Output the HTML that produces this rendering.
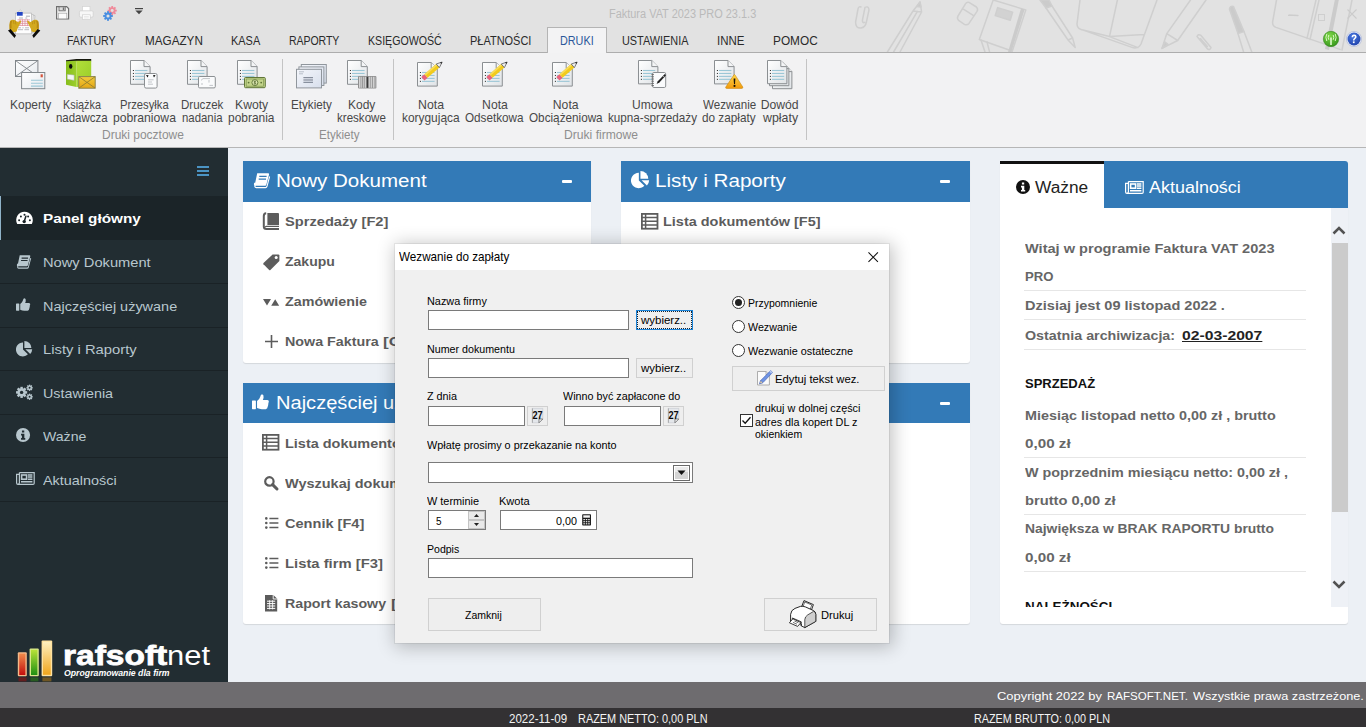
<!DOCTYPE html>
<html lang="pl">
<head>
<meta charset="utf-8">
<title>Faktura VAT 2023 PRO 23.1.3</title>
<style>
*{box-sizing:border-box;margin:0;padding:0}
html,body{width:1366px;height:727px;overflow:hidden;background:#ecf0f5;font-family:"Liberation Sans",sans-serif;}
.a{position:absolute}
.t{position:absolute;white-space:nowrap;transform-origin:0 0}
svg{position:absolute;overflow:visible}
#app{position:absolute;left:0;top:0;width:1366px;height:727px;overflow:hidden}
/* top ribbon */
#titlebar{left:0;top:0;width:1366px;height:52px;background:#e2e2e2}
#ribbon{left:0;top:52px;width:1366px;height:96px;background:#f2f2f3;border-top:1px solid #adadad}
#ribbonline{left:0;top:147px;width:1366px;height:1px;background:#b6b6b6}
#tabactive{left:547px;top:27px;width:60px;height:26px;background:#f3f3f4;border:1px solid #b4b4b4;border-bottom:none}
.rsep{position:absolute;top:59px;width:1px;height:81px;background:#c4c4c4}
/* sidebar */
#sidebar{left:0;top:148px;width:228px;height:534px;background:#222d32}
.srow{position:absolute;left:0;width:228px;height:1px;background:#1a2226}
#sactive{left:0;top:196px;width:228px;height:44px;background:#1b2428;border-left:1px solid #8fb2c8}
/* content */
.box{position:absolute;background:#fff;border-radius:0 0 3px 3px;box-shadow:0 1px 1px rgba(0,0,0,.1)}
.bh{position:absolute;background:#337ab7}
.minus{position:absolute;width:10px;height:3px;background:#fff;border-radius:1px}
/* footer */
#footer{left:0;top:682px;width:1366px;height:26px;background:#6e6c6f}
#status{left:0;top:708px;width:1366px;height:19px;background:#333133}
/* dialog */
#dlg{left:395px;top:244px;width:494px;height:399px;background:#f0f0f0;box-shadow:0 0 0 1px rgba(0,0,0,.06),2px 2px 17px 2px rgba(0,0,0,.24)}
#dlgtitle{left:0;top:0;width:494px;height:26px;background:#fff}
.inp{position:absolute;background:#fff;border:1px solid #7a7a7a}
.btn{position:absolute;background:#eeeeee;border:1px solid #d0d0d0}
.hr{position:absolute;left:24px;width:282px;height:1px;background:#e6e6e6}
.radio{position:absolute;width:13px;height:13px;border-radius:50%;background:#fff;border:1px solid #333}
</style>
</head>
<body>
<div id="app">

<!-- ===== title bar + ribbon ===== -->
<div id="titlebar" class="a"></div>
<svg style="left:0;top:0" width="1366" height="52" viewBox="0 0 1366 52"><g fill="none" stroke="#cfcfcf" stroke-width="1.5" stroke-linecap="round" stroke-linejoin="round">
<!-- paperclip -->
<path d="M858 9 L855.6 22 Q855.4 28.4 861 28 Q865.4 27.4 866.4 22 L869 10 Q868.6 5.6 865 7.4 L862.4 20.4 Q862.6 23.4 864.6 22.4 M858 9 Q858.6 6 861 7"/>
<!-- pencil -->
<path d="M920 2 L913 11 L887.4 52 M920 2 L921.6 12 L900 52 M913 11 L921.6 12 M917.4 11.4 L893.6 52"/>
<path d="M920 2 L917 6.4 L921 7 Z" fill="#cbcbcb"/>
<!-- eraser -->
<path d="M969 2.4 L976.4 7 Q978.4 9 977 11.4 L969 23.4 Q967 25.6 964.4 24.4 L958.6 20.4 Q956.6 18.4 958 16 L965.6 3.6 Q967 1.6 969 2.4 Z M962.6 8.6 L973.6 15.6"/>
<!-- notebook -->
<path d="M993.2 0 L1025.8 9.9 L1012 52 M993.2 0 L979.3 39.5 L1012 51"/>
<path d="M1021 8.6 L1008 52 L1011.4 52 L1024.6 9.6 Z" fill="#cbcbcb" stroke="none"/>
<path d="M997.6 7.6 L1012.6 12.2 L1010.2 20.2 L995.2 15.6 Z" fill="#d2d2d2"/>
<path d="M981 40 L985 52 M987 42 L989.6 52" />
<!-- pen -->
<path d="M1040 0 L1046 8 L1052 6 L1049 0 Z" fill="#cbcbcb"/>
<path d="M1046 8 L1068 40 L1075.2 47.4 L1072.6 38 L1052 6 M1068 40 L1072.6 38"/>
<!-- open notebook -->
<path d="M1080 0 L1077 24 Q1077 28 1081 29.4 L1132 47.4 Q1138 49.4 1141 44 L1157 0 M1117.4 0 L1109.5 36.6 M1109.5 36.6 L1144 34.6 M1081 29.4 L1109.5 36.6 L1138 47.6"/>
<!-- pen 2 -->
<path d="M1206 0 L1177.7 40.5 L1162 48.4 L1166.8 33.6 L1190.5 0 M1166.8 33.6 L1177.7 40.5"/>
<path d="M1162 48.4 L1165 42 L1168 44.4 Z" fill="#cbcbcb"/>
<!-- small clip -->
<path d="M1197 36.6 L1207.6 49 Q1210.4 50.4 1211 47.4 L1201 35.4 Q1198 33.4 1197 36.6 Z M1200.4 38.6 L1207.4 46.4"/>
<!-- marker -->
<path d="M1229.4 9 Q1230 5.4 1233.4 6.4 L1244 31.6 L1238 33.6 Z" fill="#cbcbcb"/>
<path d="M1238 33.6 L1243.6 52 M1244 31.6 L1251.8 52"/>
<!-- right notebook -->
<path d="M1276.5 0 L1272.6 22 Q1272.4 26 1276 27.4 L1340 49.4 M1319 0 L1310 39.5 M1316 0 L1307 38.4 M1289 15 L1298 15.4"/>
<path d="M1334.8 0 L1325 49 L1329 50 L1338.8 0 Z" fill="#cbcbcb" stroke="none"/>
<path d="M1352 0 L1342 50" />
</g></svg>
<div id="ribbon" class="a"></div>
<div id="ribbonline" class="a"></div>
<div id="tabactive" class="a"></div>
<div class="rsep" style="left:282px"></div>
<div class="rsep" style="left:393px"></div>
<div class="rsep" style="left:806px"></div>
<svg style="left:8px;top:8px" width="32.4" height="30" viewBox="0 0 32.4 30"><path d="M10.2 4.2 Q12.2 -1 14.2 4.2" fill="none" stroke="#f2f2f2" stroke-width="1.3"/><path d="M10.2 4.2 Q12.2 -1 14.2 4.2" fill="none" stroke="#9a9a9a" stroke-width="0.4"/><path d="M22 6.4 L27 7.6 L25.4 24.4 L21 24 Z" fill="#ededee" stroke="#a6a6a6" stroke-width="0.5"/><path d="M20 5.6 L25.2 6.6 L24.2 25 L19.6 24.8 Z" fill="#f6f6f6" stroke="#a6a6a6" stroke-width="0.5"/><rect x="7.3" y="5.1" width="16.4" height="20.8" fill="#fdfdfd" stroke="#a8a8a8" stroke-width="0.6"/><rect x="8.9" y="4" width="5.8" height="3.7" fill="#2346c4"/><path d="M18 8.2 H22 M11 10 H15 M17.4 10 H19.2" stroke="#9a9aa4" stroke-width="0.8"/><path d="M9.5 11.8 H22 M9.5 13.7 H22 M9.5 15.6 H22 M9.5 17.5 H22 M12 11.4 V17.9 M14.5 11.4 V17.9 M17 11.4 V17.9 M19.5 11.4 V17.9" stroke="#dc8a98" stroke-width="0.7"/><path d="M10 19.8 H13 M14.4 19.8 H15.6 M17 19.8 H21 M10 21.7 H15 M16.4 21.7 H21" stroke="#a8a8b0" stroke-width="0.8"/><path d="M8 25.9 H23.4 L24.6 27 H9.4 Z" fill="#d8d8d8"/><path d="M2 13.4 Q2.6 11.4 4.8 11.8 Q6.6 11.6 8.4 13.2 L10.4 14.2 L12.2 12.4 Q13.4 12.4 13 14 L11.4 17 L9.6 20.4 L8.6 23.4 L4.6 24.6 L1.6 21.2 Q1.2 17 2 13.4 Z" fill="#d3a91e"/><path d="M2 13.4 Q1.2 17 1.6 21.2 L3.6 20 Q3 16 4.2 12.6 Z" fill="#b88a12"/><path d="M5.4 12.4 L6 16 M7.4 12.8 L7.8 16.4" stroke="#a87c10" stroke-width="0.5" fill="none"/><path d="M0 22.6 L2.6 21 L8 27.6 L6.6 29.9 Z" fill="#0c0c0c"/><g transform="translate(32.3 0) scale(-1 1)"><path d="M2 13.4 Q2.6 11.4 4.8 11.8 Q6.6 11.6 8.4 13.2 L10.4 14.2 L12.2 12.4 Q13.4 12.4 13 14 L11.4 17 L9.6 20.4 L8.6 23.4 L4.6 24.6 L1.6 21.2 Q1.2 17 2 13.4 Z" fill="#d3a91e"/><path d="M2 13.4 Q1.2 17 1.6 21.2 L3.6 20 Q3 16 4.2 12.6 Z" fill="#b88a12"/><path d="M5.4 12.4 L6 16 M7.4 12.8 L7.8 16.4" stroke="#a87c10" stroke-width="0.5" fill="none"/><path d="M0 22.6 L2.6 21 L8 27.6 L6.6 29.9 Z" fill="#0c0c0c"/></g></svg><svg style="left:56px;top:5.8px" width="13.2" height="13.6" viewBox="0 0 13.2 13.6"><path d="M0.6 0.6 H10.6 L12.6 2.6 V13 H0.6 Z" fill="#f2f2f2" stroke="#6e6e6e" stroke-width="1.2"/><rect x="3" y="0.8" width="6.2" height="4" fill="#dcdcdc" stroke="#6e6e6e" stroke-width="0.9"/><rect x="6.8" y="1.4" width="1.4" height="2.6" fill="#6e6e6e"/><rect x="2.4" y="7.2" width="8.4" height="5.6" fill="#fbfbfb" stroke="#a0a0a0" stroke-width="0.6"/></svg><svg style="left:78.6px;top:5.6px" width="14.6" height="14" viewBox="0 0 14.6 14"><rect x="3.6" y="0.4" width="7.4" height="5" fill="#fff" stroke="#d2d2d2" stroke-width="0.7"/><rect x="0.4" y="4.8" width="13.8" height="6.4" rx="1.4" fill="#f7f7f7" stroke="#d0d0d0" stroke-width="0.8"/><rect x="3.4" y="8.8" width="7.8" height="4.8" fill="#fff" stroke="#cfcfcf" stroke-width="0.7"/><path d="M4.8 10.6 H9.8 M4.8 12 H9.8" stroke="#d6d6d6" stroke-width="0.6"/></svg><svg style="left:102.6px;top:5.6px" width="14" height="15" viewBox="0 0 14 15"><rect x="8.31" y="0.05" width="1.78" height="9.11" fill="#f08a9a" transform="rotate(0 9.2 4.6)"/><rect x="8.31" y="0.05" width="1.78" height="9.11" fill="#f08a9a" transform="rotate(45 9.2 4.6)"/><rect x="8.31" y="0.05" width="1.78" height="9.11" fill="#f08a9a" transform="rotate(90 9.2 4.6)"/><rect x="8.31" y="0.05" width="1.78" height="9.11" fill="#f08a9a" transform="rotate(135 9.2 4.6)"/><circle cx="9.2" cy="4.6" r="3.3" fill="#f08a9a"/><circle cx="9.2" cy="4.6" r="1.48" fill="#e2e2e2"/><rect x="4.05" y="5.17" width="1.89" height="9.66" fill="#4a8ee0" transform="rotate(0 5 10)"/><rect x="4.05" y="5.17" width="1.89" height="9.66" fill="#4a8ee0" transform="rotate(45 5 10)"/><rect x="4.05" y="5.17" width="1.89" height="9.66" fill="#4a8ee0" transform="rotate(90 5 10)"/><rect x="4.05" y="5.17" width="1.89" height="9.66" fill="#4a8ee0" transform="rotate(135 5 10)"/><circle cx="5" cy="10" r="3.5" fill="#4a8ee0"/><circle cx="5" cy="10" r="1.57" fill="#e2e2e2"/></svg><svg style="left:135.2px;top:7.6px" width="8" height="6.4" viewBox="0 0 8 6.4"><rect x="0" y="0" width="8" height="1.2" fill="#444"/><path d="M0.4 2.6 H7.6 L4 6.2 Z" fill="#444"/></svg><svg style="left:1323px;top:30.799999999999997px" width="16" height="16" viewBox="0 0 16 16"><circle cx="8" cy="8" r="7.7" fill="url(#gball)" stroke="#2c7c18" stroke-width="0.5"/><path d="M8 6.4 V14" stroke="#e8ffd8" stroke-width="1.5"/><path d="M5.8 4 Q4.6 6.4 5.8 8.8 M10.2 4 Q11.4 6.4 10.2 8.8 M3.8 2.8 Q2 6.4 3.8 10 M12.2 2.8 Q14 6.4 12.2 10" fill="none" stroke="#d8f8c0" stroke-width="1"/></svg><svg style="left:1346px;top:30.9px" width="16" height="16" viewBox="0 0 16 16"><circle cx="8" cy="8" r="7.6" fill="#e8ecf8" stroke="#9aa6cc" stroke-width="0.5"/><circle cx="8" cy="8" r="6.5" fill="url(#gbl)"/><path d="M5.6 6.2 Q5.6 3.6 8.1 3.6 Q10.6 3.6 10.6 5.8 Q10.6 7.2 9.2 8 Q8.4 8.6 8.4 9.6 H7 Q6.9 8 8 7.2 Q8.9 6.6 8.9 5.8 Q8.9 5 8.1 5 Q7.2 5 7.2 6.2 Z" fill="#fff"/><rect x="6.9" y="10.4" width="1.7" height="1.7" fill="#fff"/></svg><div class="a" style="left:1288px;top:15px;width:10px;height:1px;background:#cdcdcd"></div><div class="a" style="left:1318px;top:14px;width:7px;height:7px;border:1px solid #cfcfcf"></div><svg style="left:1347px;top:9px" width="10" height="10" viewBox="0 0 10 10"><path d="M0.5 0.5 L9.5 9.5 M9.5 0.5 L0.5 9.5" stroke="#cbcbcb" stroke-width="1.1"/></svg>
<svg width="0" height="0" style="left:0;top:0"><defs>
<linearGradient id="gdoc" x1="0" y1="0" x2="1" y2="1"><stop offset="0" stop-color="#ffffff"/><stop offset="1" stop-color="#dfe3e6"/></linearGradient>
<linearGradient id="genv" x1="0" y1="0" x2="1" y2="1"><stop offset="0" stop-color="#ffffff"/><stop offset="1" stop-color="#e6eaee"/></linearGradient>
<linearGradient id="gcard" x1="0" y1="0" x2="1" y2="1"><stop offset="0" stop-color="#f4f6fb"/><stop offset="1" stop-color="#d8dfec"/></linearGradient>
<linearGradient id="gyel" x1="0" y1="0" x2="0" y2="1"><stop offset="0" stop-color="#f3cb3c"/><stop offset="1" stop-color="#e4a614"/></linearGradient>
<linearGradient id="gwarn" x1="0" y1="0" x2="0" y2="1"><stop offset="0" stop-color="#ffd84a"/><stop offset="1" stop-color="#f29a0c"/></linearGradient>
<linearGradient id="ggrn" x1="0" y1="0" x2="1" y2="0"><stop offset="0" stop-color="#86bd1c"/><stop offset="1" stop-color="#9ccf2c"/></linearGradient>
<linearGradient id="ggrn2" x1="0" y1="0" x2="1" y2="1"><stop offset="0" stop-color="#b2df3a"/><stop offset="1" stop-color="#98cc28"/></linearGradient>
<radialGradient id="gball" cx=".4" cy=".3" r=".8"><stop offset="0" stop-color="#7fd84a"/><stop offset="1" stop-color="#2f8f16"/></radialGradient>
<radialGradient id="gbl" cx=".4" cy=".3" r=".8"><stop offset="0" stop-color="#4a78e0"/><stop offset="1" stop-color="#1c3fa8"/></radialGradient>
</defs></svg><svg style="left:14.6px;top:59.8px" width="31" height="30" viewBox="0 0 31 30"><rect x="0.5" y="0.5" width="22.4" height="16" fill="url(#genv)" stroke="#80868a"/><path d="M0.8 0.8 L22.6 16.2 M22.6 0.8 L0.8 16.2" fill="none" stroke="#80868a" stroke-width="0.9"/><rect x="6.6" y="12.5" width="23.2" height="16.2" fill="url(#genv)" stroke="#80868a"/><rect x="25.6" y="14.3" width="2.2" height="3" fill="#d4553c"/><path d="M16 20.2 H27.8 M16 23.2 H27.8 M16 26.1 H27.8" stroke="#9cc7d6" stroke-width="1.1"/></svg><svg style="left:65.8px;top:58.8px" width="30" height="30" viewBox="0 0 30 30"><path d="M0 1.2 L10.4 0 H25.2 V2.2 H10.4 L0 3 Z" fill="#16180c"/><path d="M0 2.2 L10.4 1.8 V28 L0 25.8 Z" fill="url(#ggrn)"/><path d="M10.4 1.8 H25.2 V27 L10.4 28 Z" fill="url(#ggrn2)"/><ellipse cx="4.7" cy="7.4" rx="1.7" ry="2.4" fill="#0c0c0c"/><path d="M1.2 15.2 L8.2 16 V21.4 L1.2 20.2 Z" fill="#f4f6f4" stroke="#9aa88a" stroke-width="0.5"/><rect x="12.8" y="17.6" width="16.4" height="11.6" fill="url(#gyel)" stroke="#8a8450" stroke-width="1"/><path d="M13 17.8 L29 29 M29 17.8 L13 29" fill="none" stroke="#8a7a30" stroke-width="0.8"/></svg><svg style="left:130.2px;top:60px" width="20.6" height="24.8" viewBox="0 0 20.6 24.8"><path d="M0.5 0.5 H14.000000000000002 L20.1 6.6 V24.3 H0.5 Z" fill="url(#gdoc)" stroke="#8b8f92" stroke-width="1"/><path d="M14.000000000000002 0.5 V6.6 H20.1" fill="#f4f5f6" stroke="#8b8f92" stroke-width="1"/><rect x="2.9" y="10.00" width="1" height="1" fill="#222"/><rect x="5" y="9.95" width="12.4" height="1.1" fill="#9cc7d6"/><rect x="2.9" y="12.95" width="1" height="1" fill="#222"/><rect x="5" y="12.90" width="12.4" height="1.1" fill="#9cc7d6"/><rect x="2.9" y="15.90" width="1" height="1" fill="#222"/><rect x="5" y="15.85" width="12.4" height="1.1" fill="#9cc7d6"/><rect x="2.9" y="18.85" width="1" height="1" fill="#222"/><rect x="5" y="18.80" width="12.4" height="1.1" fill="#9cc7d6"/></svg><svg style="left:144.2px;top:73.2px" width="13.6" height="15.6" viewBox="0 0 13.6 15.6"><rect x="0.5" y="0.5" width="12.6" height="14.6" rx="1.6" fill="#fafbfc" stroke="#8b8f92"/><path d="M2 2 L4.6 2.2 L3.6 4.4 Z M11.6 2 L9 2.2 L10 4.4 Z" fill="#111"/><path d="M4 6.8 H9.6 M4 9 H8 M4 11.2 H9" stroke="#b4b8bc" stroke-width="0.8"/></svg><svg style="left:187px;top:60px" width="20.6" height="24.8" viewBox="0 0 20.6 24.8"><path d="M0.5 0.5 H14.000000000000002 L20.1 6.6 V24.3 H0.5 Z" fill="url(#gdoc)" stroke="#8b8f92" stroke-width="1"/><path d="M14.000000000000002 0.5 V6.6 H20.1" fill="#f4f5f6" stroke="#8b8f92" stroke-width="1"/><rect x="2.9" y="10.00" width="1" height="1" fill="#222"/><rect x="5" y="9.95" width="12.4" height="1.1" fill="#9cc7d6"/><rect x="2.9" y="12.95" width="1" height="1" fill="#222"/><rect x="5" y="12.90" width="12.4" height="1.1" fill="#9cc7d6"/><rect x="2.9" y="15.90" width="1" height="1" fill="#222"/><rect x="5" y="15.85" width="12.4" height="1.1" fill="#9cc7d6"/><rect x="2.9" y="18.85" width="1" height="1" fill="#222"/><rect x="5" y="18.80" width="12.4" height="1.1" fill="#9cc7d6"/></svg><svg style="left:198.2px;top:76.4px" width="17.8" height="12.4" viewBox="0 0 17.8 12.4"><rect x="0.5" y="0.5" width="16.8" height="11.4" rx="1.2" fill="#fafbfc" stroke="#8b8f92"/><path d="M3 4.4 L5 2.6 H12 M3 8 H5 M11.4 9.4 H15 M11 4 V6.6" stroke="#b4b8bc" stroke-width="0.8" fill="none"/></svg><svg style="left:237px;top:60px" width="20.6" height="24.8" viewBox="0 0 20.6 24.8"><path d="M0.5 0.5 H14.000000000000002 L20.1 6.6 V24.3 H0.5 Z" fill="url(#gdoc)" stroke="#8b8f92" stroke-width="1"/><path d="M14.000000000000002 0.5 V6.6 H20.1" fill="#f4f5f6" stroke="#8b8f92" stroke-width="1"/><rect x="2.9" y="10.00" width="1" height="1" fill="#222"/><rect x="5" y="9.95" width="12.4" height="1.1" fill="#9cc7d6"/><rect x="2.9" y="12.95" width="1" height="1" fill="#222"/><rect x="5" y="12.90" width="12.4" height="1.1" fill="#9cc7d6"/><rect x="2.9" y="15.90" width="1" height="1" fill="#222"/><rect x="5" y="15.85" width="12.4" height="1.1" fill="#9cc7d6"/><rect x="2.9" y="18.85" width="1" height="1" fill="#222"/><rect x="5" y="18.80" width="12.4" height="1.1" fill="#9cc7d6"/></svg><svg style="left:244px;top:77.2px" width="21.8" height="11.2" viewBox="0 0 21.8 11.2"><rect x="0.5" y="0.5" width="20.8" height="10.2" rx="1" fill="#c3d48a" stroke="#5e7436"/><rect x="2.2" y="2" width="17.4" height="7.2" fill="none" stroke="#7e9650" stroke-width="0.7"/><circle cx="10.9" cy="5.6" r="3" fill="#dbe6b0" stroke="#5e7436" stroke-width="0.9"/><path d="M10.9 3.6 V7.6 M11.9 4.6 Q10.9 3.8 10 4.8 Q10.2 5.6 10.9 5.6 Q11.8 5.8 11.8 6.6 Q10.8 7.4 9.8 6.6" stroke="#4a6028" stroke-width="0.6" fill="none"/><circle cx="4.6" cy="5.6" r="0.9" fill="#5e7436"/><circle cx="17.2" cy="5.6" r="0.9" fill="#5e7436"/></svg><svg style="left:296px;top:64.4px" width="30.4" height="24" viewBox="0 0 30.4 24"><rect x="5.3" y="0.5" width="25" height="18.6" fill="url(#gcard)" stroke="#90969c"/><rect x="2.9" y="2.9" width="25" height="18.6" fill="url(#gcard)" stroke="#90969c"/><rect x="0.5" y="5.3" width="25" height="18.6" fill="url(#gcard)" stroke="#90969c"/><path d="M3 7.8 H8 M3 9.8 H7" stroke="#aab0bc" stroke-width="0.8"/><path d="M7.4 13.7 H17 M7.4 16 H17 M7.4 18.3 H17" stroke="#707888" stroke-width="1"/></svg><svg style="left:347px;top:60px" width="20.8" height="24.8" viewBox="0 0 20.8 24.8"><path d="M0.5 0.5 H14.200000000000001 L20.3 6.6 V24.3 H0.5 Z" fill="url(#gdoc)" stroke="#8b8f92" stroke-width="1"/><path d="M14.200000000000001 0.5 V6.6 H20.3" fill="#f4f5f6" stroke="#8b8f92" stroke-width="1"/><rect x="2.9" y="10.00" width="1" height="1" fill="#222"/><rect x="5" y="9.95" width="12.6" height="1.1" fill="#9cc7d6"/><rect x="2.9" y="12.95" width="1" height="1" fill="#222"/><rect x="5" y="12.90" width="12.6" height="1.1" fill="#9cc7d6"/><rect x="2.9" y="15.90" width="1" height="1" fill="#222"/><rect x="5" y="15.85" width="12.6" height="1.1" fill="#9cc7d6"/><rect x="2.9" y="18.85" width="1" height="1" fill="#222"/><rect x="5" y="18.80" width="12.6" height="1.1" fill="#9cc7d6"/></svg><svg style="left:357.8px;top:76.1px" width="18.4" height="12.6" viewBox="0 0 18.4 12.6"><rect x="0" y="0" width="18.4" height="12.6" rx="1" fill="#8f8f8f"/><rect x="1.2" y="0.8" width="1.2" height="11" fill="#e8e8e8"/><rect x="3.2" y="0.8" width="0.8" height="11" fill="#d0d0d0"/><rect x="4.8" y="0.8" width="1.6" height="11" fill="#c4c4c4"/><rect x="7.2" y="0.8" width="0.8" height="11" fill="#e0e0e0"/><rect x="8.8" y="0.8" width="1.4" height="11" fill="#3a3a3a"/><rect x="10.8" y="0.8" width="1" height="11" fill="#dcdcdc"/><rect x="12.6" y="0.8" width="1.6" height="11" fill="#cfcfcf"/><rect x="15" y="0.8" width="0.8" height="11" fill="#e4e4e4"/><rect x="16.4" y="0.8" width="1" height="11" fill="#c8c8c8"/></svg><svg style="left:417px;top:62px" width="20.8" height="24.6" viewBox="0 0 20.8 24.6"><path d="M0.5 0.5 H14.200000000000001 L20.3 6.6 V24.1 H0.5 Z" fill="url(#gdoc)" stroke="#8b8f92" stroke-width="1"/><path d="M14.200000000000001 0.5 V6.6 H20.3" fill="#f4f5f6" stroke="#8b8f92" stroke-width="1"/><rect x="2.9" y="10.00" width="1" height="1" fill="#222"/><rect x="5" y="9.95" width="12.6" height="1.1" fill="#9cc7d6"/><rect x="2.9" y="12.95" width="1" height="1" fill="#222"/><rect x="5" y="12.90" width="12.6" height="1.1" fill="#9cc7d6"/><rect x="2.9" y="15.90" width="1" height="1" fill="#222"/><rect x="5" y="15.85" width="12.6" height="1.1" fill="#9cc7d6"/><rect x="2.9" y="18.85" width="1" height="1" fill="#222"/><rect x="5" y="18.80" width="12.6" height="1.1" fill="#9cc7d6"/></svg><svg style="left:421.6px;top:59.4px" width="26" height="24" viewBox="0 0 26 24"><g transform="rotate(-41 3.5 17.5)"><rect x="0" y="15.1" width="4.2" height="4.8" fill="#e8627c"/><rect x="4.2" y="15.1" width="15.6" height="4.8" fill="#f2cb1c"/><rect x="4.2" y="15.1" width="15.6" height="1.7" fill="#f7dc5a"/><path d="M19.8 15.1 L25.6 17.5 L19.8 19.9 Z" fill="#f0f0f0" stroke="#555" stroke-width="0.7"/><path d="M23.6 16.5 L25.6 17.5 L23.6 18.5 Z" fill="#222"/></g></svg><svg style="left:482.4px;top:62px" width="20.8" height="24.6" viewBox="0 0 20.8 24.6"><path d="M0.5 0.5 H14.200000000000001 L20.3 6.6 V24.1 H0.5 Z" fill="url(#gdoc)" stroke="#8b8f92" stroke-width="1"/><path d="M14.200000000000001 0.5 V6.6 H20.3" fill="#f4f5f6" stroke="#8b8f92" stroke-width="1"/><rect x="2.9" y="10.00" width="1" height="1" fill="#222"/><rect x="5" y="9.95" width="12.6" height="1.1" fill="#9cc7d6"/><rect x="2.9" y="12.95" width="1" height="1" fill="#222"/><rect x="5" y="12.90" width="12.6" height="1.1" fill="#9cc7d6"/><rect x="2.9" y="15.90" width="1" height="1" fill="#222"/><rect x="5" y="15.85" width="12.6" height="1.1" fill="#9cc7d6"/><rect x="2.9" y="18.85" width="1" height="1" fill="#222"/><rect x="5" y="18.80" width="12.6" height="1.1" fill="#9cc7d6"/></svg><svg style="left:487.0px;top:59.4px" width="26" height="24" viewBox="0 0 26 24"><g transform="rotate(-41 3.5 17.5)"><rect x="0" y="15.1" width="4.2" height="4.8" fill="#e8627c"/><rect x="4.2" y="15.1" width="15.6" height="4.8" fill="#f2cb1c"/><rect x="4.2" y="15.1" width="15.6" height="1.7" fill="#f7dc5a"/><path d="M19.8 15.1 L25.6 17.5 L19.8 19.9 Z" fill="#f0f0f0" stroke="#555" stroke-width="0.7"/><path d="M23.6 16.5 L25.6 17.5 L23.6 18.5 Z" fill="#222"/></g></svg><svg style="left:552.4px;top:62px" width="20.8" height="24.6" viewBox="0 0 20.8 24.6"><path d="M0.5 0.5 H14.200000000000001 L20.3 6.6 V24.1 H0.5 Z" fill="url(#gdoc)" stroke="#8b8f92" stroke-width="1"/><path d="M14.200000000000001 0.5 V6.6 H20.3" fill="#f4f5f6" stroke="#8b8f92" stroke-width="1"/><rect x="2.9" y="10.00" width="1" height="1" fill="#222"/><rect x="5" y="9.95" width="12.6" height="1.1" fill="#9cc7d6"/><rect x="2.9" y="12.95" width="1" height="1" fill="#222"/><rect x="5" y="12.90" width="12.6" height="1.1" fill="#9cc7d6"/><rect x="2.9" y="15.90" width="1" height="1" fill="#222"/><rect x="5" y="15.85" width="12.6" height="1.1" fill="#9cc7d6"/><rect x="2.9" y="18.85" width="1" height="1" fill="#222"/><rect x="5" y="18.80" width="12.6" height="1.1" fill="#9cc7d6"/></svg><svg style="left:557.0px;top:59.4px" width="26" height="24" viewBox="0 0 26 24"><g transform="rotate(-41 3.5 17.5)"><rect x="0" y="15.1" width="4.2" height="4.8" fill="#e8627c"/><rect x="4.2" y="15.1" width="15.6" height="4.8" fill="#f2cb1c"/><rect x="4.2" y="15.1" width="15.6" height="1.7" fill="#f7dc5a"/><path d="M19.8 15.1 L25.6 17.5 L19.8 19.9 Z" fill="#f0f0f0" stroke="#555" stroke-width="0.7"/><path d="M23.6 16.5 L25.6 17.5 L23.6 18.5 Z" fill="#222"/></g></svg><svg style="left:638px;top:60px" width="20.4" height="24.4" viewBox="0 0 20.4 24.4"><path d="M0.5 0.5 H13.799999999999999 L19.9 6.6 V23.9 H0.5 Z" fill="url(#gdoc)" stroke="#8b8f92" stroke-width="1"/><path d="M13.799999999999999 0.5 V6.6 H19.9" fill="#f4f5f6" stroke="#8b8f92" stroke-width="1"/><rect x="2.9" y="10.00" width="1" height="1" fill="#222"/><rect x="5" y="9.95" width="12.2" height="1.1" fill="#9cc7d6"/><rect x="2.9" y="12.95" width="1" height="1" fill="#222"/><rect x="5" y="12.90" width="12.2" height="1.1" fill="#9cc7d6"/><rect x="2.9" y="15.90" width="1" height="1" fill="#222"/><rect x="5" y="15.85" width="12.2" height="1.1" fill="#9cc7d6"/><rect x="2.9" y="18.85" width="1" height="1" fill="#222"/><rect x="5" y="18.80" width="12.2" height="1.1" fill="#9cc7d6"/></svg><svg style="left:650.8px;top:72.4px" width="15.4" height="16" viewBox="0 0 15.4 16"><rect x="1.5" y="0.5" width="13.2" height="15" rx="1.4" fill="#fafbfc" stroke="#8b8f92"/><path d="M0.4 2.6 H3 M0.4 4.8 H3 M0.4 7 H3 M0.4 9.2 H3 M0.4 11.4 H3 M0.4 13.6 H3" stroke="#666" stroke-width="0.9"/><path d="M13.8 2 L15 3.2 L8.4 10.6 L5.6 12 L6.8 9.2 Z" fill="#222"/><path d="M12 4 L13.4 5.4" stroke="#bbb" stroke-width="0.8"/></svg><svg style="left:714.2px;top:60px" width="20.6" height="24.4" viewBox="0 0 20.6 24.4"><path d="M0.5 0.5 H14.000000000000002 L20.1 6.6 V23.9 H0.5 Z" fill="url(#gdoc)" stroke="#8b8f92" stroke-width="1"/><path d="M14.000000000000002 0.5 V6.6 H20.1" fill="#f4f5f6" stroke="#8b8f92" stroke-width="1"/><rect x="2.9" y="10.00" width="1" height="1" fill="#222"/><rect x="5" y="9.95" width="12.4" height="1.1" fill="#9cc7d6"/><rect x="2.9" y="12.95" width="1" height="1" fill="#222"/><rect x="5" y="12.90" width="12.4" height="1.1" fill="#9cc7d6"/><rect x="2.9" y="15.90" width="1" height="1" fill="#222"/><rect x="5" y="15.85" width="12.4" height="1.1" fill="#9cc7d6"/><rect x="2.9" y="18.85" width="1" height="1" fill="#222"/><rect x="5" y="18.80" width="12.4" height="1.1" fill="#9cc7d6"/></svg><svg style="left:724.8px;top:73.8px" width="18.6" height="15" viewBox="0 0 18.6 15"><path d="M9 0.8 Q9.6 0.2 10.2 1.2 L17.8 13 Q18.2 14.4 16.8 14.4 H1.6 Q0.2 14.4 0.8 13 Z" fill="url(#gwarn)" stroke="#c98a10" stroke-width="0.6"/><path d="M8.6 4.6 H10.4 L10 10 H9 Z" fill="#1a1408"/><circle cx="9.5" cy="11.9" r="1.05" fill="#1a1408"/></svg><svg style="left:771.8px;top:64.6px" width="20.4" height="24.2" viewBox="0 0 20.4 24.2"><path d="M0.5 0.5 H13.799999999999999 L19.9 6.6 V23.7 H0.5 Z" fill="url(#gdoc)" stroke="#8b8f92" stroke-width="1"/><path d="M13.799999999999999 0.5 V6.6 H19.9" fill="#f4f5f6" stroke="#8b8f92" stroke-width="1"/></svg><svg style="left:769.4px;top:62.3px" width="20.4" height="24.2" viewBox="0 0 20.4 24.2"><path d="M0.5 0.5 H13.799999999999999 L19.9 6.6 V23.7 H0.5 Z" fill="url(#gdoc)" stroke="#8b8f92" stroke-width="1"/><path d="M13.799999999999999 0.5 V6.6 H19.9" fill="#f4f5f6" stroke="#8b8f92" stroke-width="1"/></svg><svg style="left:767px;top:60px" width="20.4" height="24.2" viewBox="0 0 20.4 24.2"><path d="M0.5 0.5 H13.799999999999999 L19.9 6.6 V23.7 H0.5 Z" fill="url(#gdoc)" stroke="#8b8f92" stroke-width="1"/><path d="M13.799999999999999 0.5 V6.6 H19.9" fill="#f4f5f6" stroke="#8b8f92" stroke-width="1"/><rect x="2.9" y="10.00" width="1" height="1" fill="#222"/><rect x="5" y="9.95" width="12.2" height="1.1" fill="#9cc7d6"/><rect x="2.9" y="12.95" width="1" height="1" fill="#222"/><rect x="5" y="12.90" width="12.2" height="1.1" fill="#9cc7d6"/><rect x="2.9" y="15.90" width="1" height="1" fill="#222"/><rect x="5" y="15.85" width="12.2" height="1.1" fill="#9cc7d6"/><rect x="2.9" y="18.85" width="1" height="1" fill="#222"/><rect x="5" y="18.80" width="12.2" height="1.1" fill="#9cc7d6"/></svg>

<!-- ===== sidebar ===== -->
<div id="sidebar" class="a"></div>
<div id="sactive" class="a"></div>
<div class="srow" style="top:283px"></div>
<div class="srow" style="top:327px"></div>
<div class="srow" style="top:370px"></div>
<div class="srow" style="top:414px"></div>
<div class="srow" style="top:457px"></div>
<div class="srow" style="top:501px"></div>
<svg style="left:16px;top:212px" width="17" height="12" viewBox="0 0 17 12"><path d="M1.2 12 A8.3 8.3 0 1 1 15.8 12 Z" fill="#fff"/><g fill="#1b2428"><circle cx="3.1" cy="8.2" r="1"/><circle cx="4.9" cy="4.5" r="1"/><circle cx="8.5" cy="2.7" r="1"/><circle cx="12.1" cy="4.5" r="1"/><circle cx="13.9" cy="8.2" r="1"/><circle cx="8.2" cy="9.6" r="1.7"/></g><path d="M8.2 9.6 L9.9 4.3" stroke="#1b2428" stroke-width="1.5" stroke-linecap="round"/></svg><svg style="left:16.2px;top:254.6px" width="15.1" height="13.9" viewBox="0 0 17 13.5" preserveAspectRatio="none"><path d="M4.2 0.3 H15.2 Q16.4 0.3 16 1.6 L13.3 10.2 Q13 11 12.2 11 H2.2 Q0.6 11 1 9.4 Q1.3 8.6 2.2 8.5 L4.2 0.3 Z" fill="#b8c7ce"/><path d="M2.2 8.6 Q1.2 9.6 2.2 10.4 Q1.2 12.6 3.2 12.7 H12.6 Q13.6 12.7 14 11.6 L16.6 3 " fill="none" stroke="#b8c7ce" stroke-width="1.1"/><path d="M6.3 3 H13.6 M5.7 5.3 H13" stroke="#222d32" stroke-width="1.1"/></svg><svg style="left:16.3px;top:298.3px" width="14.5" height="13.1" viewBox="0 0 15 13.5"><rect x="0" y="5.6" width="3.4" height="7.6" rx="0.5" fill="#b8c7ce"/><path d="M4.4 6.2 Q6.6 4.6 7.2 2.4 Q7.5 0.2 8.8 0.2 Q10.4 0.6 10.1 3 Q9.9 4.4 9.4 5.2 H13.4 Q14.9 5.4 14.7 6.8 Q14.6 7.5 14.2 7.8 Q14.6 8.6 14 9.5 Q14.3 10.4 13.6 11.2 Q13.8 13 12 13.2 H8.6 Q6.4 13.2 4.4 12.2 Z" fill="#b8c7ce"/></svg><svg style="left:15.8px;top:340.5px" width="16.5" height="15.0" viewBox="0 0 16.5 15"><path d="M7 1.6 V8.4 L11.9 13.2 A6.9 6.9 0 1 1 7 1.6 Z" fill="#b8c7ce"/><path d="M8.4 0 A7 7 0 0 1 15.4 7 H8.4 Z" fill="#b8c7ce"/><path d="M9.4 8.3 H16.2 A6.9 6.9 0 0 1 14.2 13 Z" fill="#b8c7ce"/></svg><svg style="left:15.8px;top:384.2px" width="17.6" height="16.2" viewBox="0 0 17.6 16.2"><rect x="4.37" y="2.82" width="2.46" height="11.15" fill="#b8c7ce" transform="rotate(0.0 5.6 8.4)"/><rect x="4.37" y="2.82" width="2.46" height="11.15" fill="#b8c7ce" transform="rotate(45.0 5.6 8.4)"/><rect x="4.37" y="2.82" width="2.46" height="11.15" fill="#b8c7ce" transform="rotate(90.0 5.6 8.4)"/><rect x="4.37" y="2.82" width="2.46" height="11.15" fill="#b8c7ce" transform="rotate(135.0 5.6 8.4)"/><circle cx="5.6" cy="8.4" r="4.1" fill="#b8c7ce"/><circle cx="5.6" cy="8.4" r="1.72" fill="#222d32"/><rect x="12.91" y="0.67" width="1.38" height="6.26" fill="#b8c7ce" transform="rotate(0.0 13.6 3.8)"/><rect x="12.91" y="0.67" width="1.38" height="6.26" fill="#b8c7ce" transform="rotate(45.0 13.6 3.8)"/><rect x="12.91" y="0.67" width="1.38" height="6.26" fill="#b8c7ce" transform="rotate(90.0 13.6 3.8)"/><rect x="12.91" y="0.67" width="1.38" height="6.26" fill="#b8c7ce" transform="rotate(135.0 13.6 3.8)"/><circle cx="13.6" cy="3.8" r="2.3" fill="#b8c7ce"/><circle cx="13.6" cy="3.8" r="0.97" fill="#222d32"/><rect x="12.91" y="9.67" width="1.38" height="6.26" fill="#b8c7ce" transform="rotate(0.0 13.6 12.8)"/><rect x="12.91" y="9.67" width="1.38" height="6.26" fill="#b8c7ce" transform="rotate(45.0 13.6 12.8)"/><rect x="12.91" y="9.67" width="1.38" height="6.26" fill="#b8c7ce" transform="rotate(90.0 13.6 12.8)"/><rect x="12.91" y="9.67" width="1.38" height="6.26" fill="#b8c7ce" transform="rotate(135.0 13.6 12.8)"/><circle cx="13.6" cy="12.8" r="2.3" fill="#b8c7ce"/><circle cx="13.6" cy="12.8" r="0.97" fill="#222d32"/></svg><svg style="left:15.8px;top:428.2px" width="14.1" height="14.1" viewBox="0 0 14 14"><circle cx="7" cy="7" r="7" fill="#b8c7ce"/><path d="M5.9 2.4 H8.2 V4.4 H5.9 Z M5 5.8 H8.3 V10 H9.2 V11.6 H5 V10 H5.9 V7.4 H5 Z" fill="#222d32"/></svg><svg style="left:15.8px;top:472.2px" width="18.8" height="13.0" viewBox="0 0 18.8 13"><path d="M3.4 0.6 H18.2 V11.2 Q18.2 12.4 17 12.4 H2 Q0.6 12.4 0.6 11 V2.4 H3.4" fill="none" stroke="#b8c7ce" stroke-width="1.2"/><path d="M3.4 0.6 V11 Q3.3 12.3 2 12.4" fill="none" stroke="#b8c7ce" stroke-width="1.2"/><rect x="5.6" y="3" width="5" height="4.2" fill="none" stroke="#b8c7ce" stroke-width="1.6"/><path d="M12 3 H16.4 M12 5.1 H16.4 M12 7.2 H16.4 M5 9.7 H16.4" stroke="#b8c7ce" stroke-width="1.5"/></svg><div class="a" style="left:197px;top:166px;width:12px;height:2px;background:#4b94c4"></div><div class="a" style="left:197px;top:170px;width:12px;height:2px;background:#4b94c4"></div><div class="a" style="left:197px;top:174px;width:12px;height:2px;background:#4b94c4"></div>
<svg style="left:17px;top:640px" width="37" height="42" viewBox="0 0 37 42">
<defs>
<linearGradient id="lg1" x1="0" y1="0" x2="0" y2="1"><stop offset="0" stop-color="#f08a4a"/><stop offset="1" stop-color="#c30d0d"/></linearGradient>
<linearGradient id="lg2" x1="0" y1="0" x2="0" y2="1"><stop offset="0" stop-color="#b8e238"/><stop offset="1" stop-color="#1f8f12"/></linearGradient>
<linearGradient id="lg3" x1="0" y1="0" x2="0" y2="1"><stop offset="0" stop-color="#fff0c0"/><stop offset="1" stop-color="#f0a51c"/></linearGradient>
</defs>
<rect x="0.8" y="12.2" width="9" height="24" rx="1" fill="#f5b98a"/><rect x="2.2" y="13.6" width="6.2" height="21.4" fill="url(#lg1)"/>
<rect x="12.6" y="8.4" width="9.2" height="27.8" rx="1" fill="#d9e88a"/><rect x="14" y="9.8" width="6.4" height="25.2" fill="url(#lg2)"/>
<rect x="24.6" y="0.4" width="10.6" height="35.8" rx="1" fill="#ffe2a0"/><rect x="26" y="1.8" width="7.8" height="33" fill="url(#lg3)"/>
<rect x="1.5" y="37.4" width="8" height="4" fill="#7a1818" opacity=".75"/>
<rect x="13.4" y="37.4" width="8" height="4" fill="#2a6a1c" opacity=".75"/>
<rect x="25.4" y="37.4" width="9" height="4" fill="#8a6420" opacity=".75"/>
</svg>

<!-- ===== content panels ===== -->
<div class="box" style="left:243px;top:161px;width:348px;height:202px"></div>
<div class="bh" style="left:243px;top:161px;width:348px;height:41px"></div>
<div class="minus" style="left:562px;top:180px"></div>

<div class="box" style="left:621px;top:161px;width:349px;height:202px"></div>
<div class="bh" style="left:621px;top:161px;width:349px;height:41px"></div>
<div class="minus" style="left:940px;top:180px"></div>

<div class="box" style="left:243px;top:383px;width:727px;height:241px"></div>
<div class="bh" style="left:243px;top:383px;width:727px;height:40px"></div>
<div class="minus" style="left:940px;top:402px"></div>

<!-- right tab box -->
<div class="box" style="left:1000px;top:161px;width:348px;height:463px;border-radius:3px"></div>
<div class="bh" style="left:1104px;top:161px;width:244px;height:47px;border-radius:0 3px 0 0"></div>
<div class="a" style="left:1000px;top:161px;width:104px;height:3px;background:#111"></div>
<!-- scroll bar -->
<div class="a" style="left:1331px;top:208px;width:17px;height:399px;background:#eef1f6"></div>
<div class="a" style="left:1332px;top:243px;width:16px;height:269px;background:#cbcbcb"></div>
<svg style="left:1332px;top:224px" width="14" height="12" viewBox="0 0 14 12"><path d="M1.5 9.5 L7 4 L12.5 9.5" fill="none" stroke="#525252" stroke-width="2.5"/></svg>
<svg style="left:1332px;top:579px" width="14" height="12" viewBox="0 0 14 12"><path d="M1.5 2.5 L7 8 L12.5 2.5" fill="none" stroke="#525252" stroke-width="2.5"/></svg>
<div id="scroll" class="a" style="left:1000px;top:208px;width:331px;height:399px;overflow:hidden">
<div class="hr" style="top:82px"></div>
<div class="hr" style="top:111px"></div>
<div class="hr" style="top:141px"></div>
<div class="hr" style="top:249px"></div>
<div class="hr" style="top:306px"></div>
<div class="hr" style="top:363px"></div>
<span class="t" style="left:25.1px;top:34.25px;font-size:13.4px;line-height:13.4px;color:#666;transform:scaleX(1.088);font-weight:700;">Witaj w programie Faktura VAT 2023</span>
<span class="t" style="left:25.1px;top:62.25px;font-size:13.4px;line-height:13.4px;color:#666;transform:scaleX(0.980);font-weight:700;">PRO</span>
<span class="t" style="left:25.1px;top:91.25px;font-size:13.4px;line-height:13.4px;color:#666;transform:scaleX(1.087);font-weight:700;">Dzisiaj jest 09 listopad 2022 .</span>
<span class="t" style="left:25.1px;top:121.25px;font-size:13.4px;line-height:13.4px;color:#666;transform:scaleX(1.067);font-weight:700;">Ostatnia archiwizacja:</span>
<span class="t" style="left:181.6px;top:121.25px;font-size:13.4px;line-height:13.4px;color:#222;transform:scaleX(1.173);font-weight:700;text-decoration:underline;">02-03-2007</span>
<span class="t" style="left:25.1px;top:169.25px;font-size:13.4px;line-height:13.4px;color:#111;transform:scaleX(0.971);font-weight:700;">SPRZEDAŻ</span>
<span class="t" style="left:25.1px;top:201.25px;font-size:13.4px;line-height:13.4px;color:#666;transform:scaleX(1.073);font-weight:700;">Miesiąc listopad netto 0,00 zł , brutto</span>
<span class="t" style="left:25.1px;top:229.25px;font-size:13.4px;line-height:13.4px;color:#666;transform:scaleX(1.136);font-weight:700;">0,00 zł</span>
<span class="t" style="left:25.1px;top:258.25px;font-size:13.4px;line-height:13.4px;color:#666;transform:scaleX(1.071);font-weight:700;">W poprzednim miesiącu netto: 0,00 zł ,</span>
<span class="t" style="left:25.1px;top:286.25px;font-size:13.4px;line-height:13.4px;color:#666;transform:scaleX(1.098);font-weight:700;">brutto 0,00 zł</span>
<span class="t" style="left:25.1px;top:314.25px;font-size:13.4px;line-height:13.4px;color:#666;transform:scaleX(1.036);font-weight:700;">Największa w BRAK RAPORTU brutto</span>
<span class="t" style="left:25.1px;top:343.25px;font-size:13.4px;line-height:13.4px;color:#666;transform:scaleX(1.136);font-weight:700;">0,00 zł</span>
<span class="t" style="left:25.1px;top:392.25px;font-size:13.4px;line-height:13.4px;color:#111;font-weight:700;">NALEŻNOŚCI</span>
</div>
<svg style="left:252.9px;top:172.6px" width="17.0" height="15.5" viewBox="0 0 17 13.5" preserveAspectRatio="none"><path d="M4.2 0.3 H15.2 Q16.4 0.3 16 1.6 L13.3 10.2 Q13 11 12.2 11 H2.2 Q0.6 11 1 9.4 Q1.3 8.6 2.2 8.5 L4.2 0.3 Z" fill="#fff"/><path d="M2.2 8.6 Q1.2 9.6 2.2 10.4 Q1.2 12.6 3.2 12.7 H12.6 Q13.6 12.7 14 11.6 L16.6 3 " fill="none" stroke="#fff" stroke-width="1.1"/><path d="M6.3 3 H13.6 M5.7 5.3 H13" stroke="#337ab7" stroke-width="1.1"/></svg><svg style="left:631px;top:171.4px" width="18.5" height="16.8" viewBox="0 0 16.5 15"><path d="M7 1.6 V8.4 L11.9 13.2 A6.9 6.9 0 1 1 7 1.6 Z" fill="#fff"/><path d="M8.4 0 A7 7 0 0 1 15.4 7 H8.4 Z" fill="#fff"/><path d="M9.4 8.3 H16.2 A6.9 6.9 0 0 1 14.2 13 Z" fill="#fff"/></svg><svg style="left:252.4px;top:394.4px" width="17.2" height="15.5" viewBox="0 0 15 13.5"><rect x="0" y="5.6" width="3.4" height="7.6" rx="0.5" fill="#fff"/><path d="M4.4 6.2 Q6.6 4.6 7.2 2.4 Q7.5 0.2 8.8 0.2 Q10.4 0.6 10.1 3 Q9.9 4.4 9.4 5.2 H13.4 Q14.9 5.4 14.7 6.8 Q14.6 7.5 14.2 7.8 Q14.6 8.6 14 9.5 Q14.3 10.4 13.6 11.2 Q13.8 13 12 13.2 H8.6 Q6.4 13.2 4.4 12.2 Z" fill="#fff"/></svg><svg style="left:263.1px;top:213.3px" width="16.4" height="16.8" viewBox="0 0 16.4 16.8"><path d="M4.4 0 H15 Q16 0 16 1 V12 H4.4 Z" fill="#5c5c5c"/><path d="M3.2 0.2 Q0.8 0.4 0.8 3 V13.4 Q0.8 16 3.4 16 H16 " fill="none" stroke="#5c5c5c" stroke-width="2"/><path d="M16 13.3 H3.4 Q2.2 13.4 2.2 14.6" fill="none" stroke="#5c5c5c" stroke-width="1.2"/></svg><svg style="left:263px;top:253.8px" width="16.6" height="16.6" viewBox="0 0 16.6 16.6"><path d="M9.6 0.4 H15.4 Q16.4 0.4 16.4 1.4 V7 L7.4 16 Q6.8 16.5 6.2 16 L0.5 10.2 Q0 9.6 0.5 9 Z" fill="#5c5c5c"/><circle cx="13.2" cy="3.6" r="1.5" fill="#fff"/></svg><svg style="left:263.1px;top:299px" width="16.4" height="7" viewBox="0 0 16.4 7"><path d="M0 0 H8 L4 6.6 Z M8.2 6.8 H16.2 L12.2 0.2 Z" fill="#5c5c5c"/></svg><svg style="left:264.6px;top:335.2px" width="13" height="13" viewBox="0 0 13 13"><path d="M6.5 0 V13 M0 6.5 H13" stroke="#5c5c5c" stroke-width="1.6" fill="none"/></svg><svg style="left:641.2px;top:212.8px" width="17.4" height="16.6" viewBox="0 0 17.4 16.6"><rect x="0.9" y="0.9" width="15.6" height="14.8" fill="none" stroke="#5c5c5c" stroke-width="1.8"/><path d="M1 4.6 H16.4 M1 8.3 H16.4 M1 12 H16.4 M4.6 1 V15.6" stroke="#5c5c5c" stroke-width="1.5"/></svg><svg style="left:262.3px;top:434.3px" width="17.4" height="16.6" viewBox="0 0 17.4 16.6"><rect x="0.9" y="0.9" width="15.6" height="14.8" fill="none" stroke="#5c5c5c" stroke-width="1.8"/><path d="M1 4.6 H16.4 M1 8.3 H16.4 M1 12 H16.4 M4.6 1 V15.6" stroke="#5c5c5c" stroke-width="1.5"/></svg><svg style="left:264px;top:475.8px" width="14" height="14" viewBox="0 0 14 14"><circle cx="5.4" cy="5.4" r="4.2" fill="none" stroke="#5c5c5c" stroke-width="2.2"/><path d="M8.6 8.6 L13 13" stroke="#5c5c5c" stroke-width="3" stroke-linecap="round"/></svg><svg style="left:264.7px;top:517px" width="13.4" height="12" viewBox="0 0 13.4 12"><g fill="#5c5c5c"><circle cx="1.3" cy="1.4" r="1.3"/><circle cx="1.3" cy="6" r="1.3"/><circle cx="1.3" cy="10.6" r="1.3"/></g><path d="M4.4 1.4 H13.4 M4.4 6 H13.4 M4.4 10.6 H13.4" stroke="#5c5c5c" stroke-width="1.5"/></svg><svg style="left:264.7px;top:557px" width="13.4" height="12" viewBox="0 0 13.4 12"><g fill="#5c5c5c"><circle cx="1.3" cy="1.4" r="1.3"/><circle cx="1.3" cy="6" r="1.3"/><circle cx="1.3" cy="10.6" r="1.3"/></g><path d="M4.4 1.4 H13.4 M4.4 6 H13.4 M4.4 10.6 H13.4" stroke="#5c5c5c" stroke-width="1.5"/></svg><svg style="left:264.8px;top:594.6px" width="12.2" height="16.4" viewBox="0 0 12.2 16.4"><path d="M0 0 H8.4 L12.2 3.8 V16.4 H0 Z" fill="#5c5c5c"/><path d="M8.2 0 V4 H12.2" fill="none" stroke="#fff" stroke-width="0.9"/><path d="M2 6.2 H10.2 M2 8.6 H10.2 M2 11 H10.2 M2 13.4 H10.2" stroke="#fff" stroke-width="1"/><path d="M4.6 5.2 V14.4 M7.6 5.2 V14.4" stroke="#fff" stroke-width="0.8"/></svg><svg style="left:1015.6px;top:179.5px" width="14.0" height="14.0" viewBox="0 0 14 14"><circle cx="7" cy="7" r="7" fill="#111"/><path d="M5.9 2.4 H8.2 V4.4 H5.9 Z M5 5.8 H8.3 V10 H9.2 V11.6 H5 V10 H5.9 V7.4 H5 Z" fill="#fff"/></svg><svg style="left:1125px;top:180.8px" width="18.8" height="13.0" viewBox="0 0 18.8 13"><path d="M3.4 0.6 H18.2 V11.2 Q18.2 12.4 17 12.4 H2 Q0.6 12.4 0.6 11 V2.4 H3.4" fill="none" stroke="#fff" stroke-width="1.2"/><path d="M3.4 0.6 V11 Q3.3 12.3 2 12.4" fill="none" stroke="#fff" stroke-width="1.2"/><rect x="5.6" y="3" width="5" height="4.2" fill="none" stroke="#fff" stroke-width="1.6"/><path d="M12 3 H16.4 M12 5.1 H16.4 M12 7.2 H16.4 M5 9.7 H16.4" stroke="#fff" stroke-width="1.5"/></svg>

<!-- ===== footer ===== -->
<div id="footer" class="a"></div>
<div id="status" class="a"></div>

<span class="t" style="left:608.6px;top:8.25px;font-size:12px;line-height:12px;color:#bababa;transform:scaleX(0.912);">Faktura VAT 2023 PRO 23.1.3</span>
<span class="t" style="left:67.2px;top:34.25px;font-size:13.5px;line-height:13.5px;color:#2a2a2a;transform:scaleX(0.783);">FAKTURY</span>
<span class="t" style="left:144.5px;top:34.25px;font-size:13.5px;line-height:13.5px;color:#2a2a2a;transform:scaleX(0.867);">MAGAZYN</span>
<span class="t" style="left:231.2px;top:34.25px;font-size:13.5px;line-height:13.5px;color:#2a2a2a;transform:scaleX(0.810);">KASA</span>
<span class="t" style="left:289.2px;top:34.25px;font-size:13.5px;line-height:13.5px;color:#2a2a2a;letter-spacing:-0.09px;transform:scaleX(0.780);">RAPORTY</span>
<span class="t" style="left:368.0px;top:34.25px;font-size:13.5px;line-height:13.5px;color:#2a2a2a;transform:scaleX(0.787);">KSIĘGOWOŚĆ</span>
<span class="t" style="left:470.2px;top:34.25px;font-size:13.5px;line-height:13.5px;color:#2a2a2a;transform:scaleX(0.813);">PŁATNOŚCI</span>
<span class="t" style="left:560.0px;top:34.25px;font-size:13.5px;line-height:13.5px;color:#2b579a;transform:scaleX(0.801);">DRUKI</span>
<span class="t" style="left:622.0px;top:34.25px;font-size:13.5px;line-height:13.5px;color:#2a2a2a;transform:scaleX(0.806);">USTAWIENIA</span>
<span class="t" style="left:717.0px;top:34.25px;font-size:13.5px;line-height:13.5px;color:#2a2a2a;transform:scaleX(0.851);">INNE</span>
<span class="t" style="left:773.0px;top:34.25px;font-size:13.5px;line-height:13.5px;color:#2a2a2a;transform:scaleX(0.876);">POMOC</span>
<span class="t" style="left:9.9px;top:99.25px;font-size:12.2px;line-height:12.2px;color:#484848;transform:scaleX(0.982);">Koperty</span>
<span class="t" style="left:63.0px;top:99.25px;font-size:12.2px;line-height:12.2px;color:#484848;transform:scaleX(0.890);">Książka</span>
<span class="t" style="left:56.2px;top:112.25px;font-size:12.2px;line-height:12.2px;color:#484848;transform:scaleX(0.940);">nadawcza</span>
<span class="t" style="left:120.3px;top:99.25px;font-size:12.2px;line-height:12.2px;color:#484848;transform:scaleX(0.921);">Przesyłka</span>
<span class="t" style="left:112.9px;top:112.25px;font-size:12.2px;line-height:12.2px;color:#484848;">pobraniowa</span>
<span class="t" style="left:180.8px;top:99.25px;font-size:12.2px;line-height:12.2px;color:#484848;transform:scaleX(0.948);">Druczek</span>
<span class="t" style="left:181.9px;top:112.25px;font-size:12.2px;line-height:12.2px;color:#484848;transform:scaleX(0.935);">nadania</span>
<span class="t" style="left:235.0px;top:99.25px;font-size:12.2px;line-height:12.2px;color:#484848;">Kwoty</span>
<span class="t" style="left:228.2px;top:112.25px;font-size:12.2px;line-height:12.2px;color:#484848;transform:scaleX(0.980);">pobrania</span>
<span class="t" style="left:291.0px;top:99.25px;font-size:12.2px;line-height:12.2px;color:#484848;transform:scaleX(0.956);">Etykiety</span>
<span class="t" style="left:347.7px;top:99.25px;font-size:12.2px;line-height:12.2px;color:#484848;transform:scaleX(0.985);">Kody</span>
<span class="t" style="left:337.0px;top:112.25px;font-size:12.2px;line-height:12.2px;color:#484848;transform:scaleX(0.949);">kreskowe</span>
<span class="t" style="left:417.7px;top:99.25px;font-size:12.2px;line-height:12.2px;color:#484848;transform:scaleX(1.009);">Nota</span>
<span class="t" style="left:402.0px;top:112.25px;font-size:12.2px;line-height:12.2px;color:#484848;transform:scaleX(0.977);">korygująca</span>
<span class="t" style="left:482.1px;top:99.25px;font-size:12.2px;line-height:12.2px;color:#484848;">Nota</span>
<span class="t" style="left:465.1px;top:112.25px;font-size:12.2px;line-height:12.2px;color:#484848;transform:scaleX(0.961);">Odsetkowa</span>
<span class="t" style="left:552.8px;top:99.25px;font-size:12.2px;line-height:12.2px;color:#484848;">Nota</span>
<span class="t" style="left:528.9px;top:112.25px;font-size:12.2px;line-height:12.2px;color:#484848;transform:scaleX(0.962);">Obciążeniowa</span>
<span class="t" style="left:631.8px;top:99.25px;font-size:12.2px;line-height:12.2px;color:#484848;transform:scaleX(0.987);">Umowa</span>
<span class="t" style="left:607.8px;top:112.25px;font-size:12.2px;line-height:12.2px;color:#484848;transform:scaleX(0.959);">kupna-sprzedaży</span>
<span class="t" style="left:703.0px;top:99.25px;font-size:12.2px;line-height:12.2px;color:#484848;transform:scaleX(0.951);">Wezwanie</span>
<span class="t" style="left:702.3px;top:112.25px;font-size:12.2px;line-height:12.2px;color:#484848;transform:scaleX(0.964);">do zapłaty</span>
<span class="t" style="left:760.7px;top:99.25px;font-size:12.2px;line-height:12.2px;color:#484848;">Dowód</span>
<span class="t" style="left:762.8px;top:112.25px;font-size:12.2px;line-height:12.2px;color:#484848;transform:scaleX(1.015);">wpłaty</span>
<span class="t" style="left:102.3px;top:129.25px;font-size:12.2px;line-height:12.2px;color:#8e8e8e;transform:scaleX(0.983);">Druki pocztowe</span>
<span class="t" style="left:319.2px;top:129.25px;font-size:12.2px;line-height:12.2px;color:#8e8e8e;transform:scaleX(0.951);">Etykiety</span>
<span class="t" style="left:563.9px;top:129.25px;font-size:12.2px;line-height:12.2px;color:#8e8e8e;transform:scaleX(0.994);">Druki firmowe</span>
<span class="t" style="left:42.8px;top:212.25px;font-size:13.1px;line-height:13.1px;color:#fff;transform:scaleX(1.168);font-weight:700;">Panel główny</span>
<span class="t" style="left:42.8px;top:256.25px;font-size:13.1px;line-height:13.1px;color:#b8c7ce;transform:scaleX(1.121);">Nowy Dokument</span>
<span class="t" style="left:42.8px;top:300.25px;font-size:13.1px;line-height:13.1px;color:#b8c7ce;transform:scaleX(1.104);">Najczęściej używane</span>
<span class="t" style="left:42.8px;top:343.25px;font-size:13.1px;line-height:13.1px;color:#b8c7ce;transform:scaleX(1.130);">Listy i Raporty</span>
<span class="t" style="left:42.8px;top:387.25px;font-size:13.1px;line-height:13.1px;color:#b8c7ce;transform:scaleX(1.094);">Ustawienia</span>
<span class="t" style="left:42.8px;top:430.25px;font-size:13.1px;line-height:13.1px;color:#b8c7ce;transform:scaleX(1.076);">Ważne</span>
<span class="t" style="left:42.8px;top:474.25px;font-size:13.1px;line-height:13.1px;color:#b8c7ce;transform:scaleX(1.101);">Aktualności</span>
<span class="t" style="left:62.9px;top:641.25px;font-size:28.2px;line-height:28.2px;color:#fff;transform:scaleX(1.188);font-weight:700;-webkit-text-stroke:0.8px #fff;">rafsoft</span>
<span class="t" style="left:166.9px;top:641.25px;font-size:28.2px;line-height:28.2px;color:#fff;transform:scaleX(1.098);">net</span>
<span class="t" style="left:63.8px;top:669.25px;font-size:8.4px;line-height:8.4px;color:#fff;transform:scaleX(1.041);font-weight:700;font-style:italic;">Oprogramowanie dla firm</span>
<span class="t" style="left:275.6px;top:172.25px;font-size:18.3px;line-height:18.3px;color:#fff;transform:scaleX(1.123);">Nowy Dokument</span>
<span class="t" style="left:654.9px;top:172.25px;font-size:18.3px;line-height:18.3px;color:#fff;transform:scaleX(1.129);">Listy i Raporty</span>
<span class="t" style="left:275.9px;top:394.25px;font-size:18.3px;line-height:18.3px;color:#fff;transform:scaleX(1.098);">Najczęściej używane</span>
<span class="t" style="left:284.8px;top:215.25px;font-size:13.7px;line-height:13.7px;color:#5c5c5c;transform:scaleX(1.070);font-weight:700;">Sprzedaży [F2]</span>
<span class="t" style="left:284.8px;top:255.25px;font-size:13.7px;line-height:13.7px;color:#5c5c5c;transform:scaleX(1.025);font-weight:700;">Zakupu</span>
<span class="t" style="left:284.8px;top:295.25px;font-size:13.7px;line-height:13.7px;color:#5c5c5c;transform:scaleX(1.045);font-weight:700;">Zamówienie</span>
<span class="t" style="left:284.8px;top:335.25px;font-size:13.7px;line-height:13.7px;color:#5c5c5c;transform:scaleX(1.044);font-weight:700;">Nowa Faktura</span>
<span class="t" style="left:383.4px;top:335.25px;font-size:13.7px;line-height:13.7px;color:#5c5c5c;transform:scaleX(1.241);font-weight:700;">[Ctrl+N]</span>
<span class="t" style="left:663.2px;top:215.25px;font-size:13.7px;line-height:13.7px;color:#5c5c5c;transform:scaleX(1.057);font-weight:700;">Lista dokumentów [F5]</span>
<span class="t" style="left:284.9px;top:437.25px;font-size:13.7px;line-height:13.7px;color:#5c5c5c;transform:scaleX(1.057);font-weight:700;">Lista dokumentów [F5]</span>
<span class="t" style="left:284.9px;top:477.25px;font-size:13.7px;line-height:13.7px;color:#5c5c5c;transform:scaleX(1.058);font-weight:700;">Wyszukaj dokument</span>
<span class="t" style="left:284.9px;top:517.25px;font-size:13.7px;line-height:13.7px;color:#5c5c5c;transform:scaleX(1.064);font-weight:700;">Cennik [F4]</span>
<span class="t" style="left:284.9px;top:557.25px;font-size:13.7px;line-height:13.7px;color:#5c5c5c;transform:scaleX(1.081);font-weight:700;">Lista firm [F3]</span>
<span class="t" style="left:284.9px;top:597.25px;font-size:13.7px;line-height:13.7px;color:#5c5c5c;transform:scaleX(1.038);font-weight:700;">Raport kasowy</span>
<span class="t" style="left:390.8px;top:597.25px;font-size:13.7px;line-height:13.7px;color:#5c5c5c;letter-spacing:0.27px;transform:scaleX(1.250);font-weight:700;">[F7]</span>
<span class="t" style="left:1035.0px;top:179.25px;font-size:17.3px;line-height:17.3px;color:#222;">Ważne</span>
<span class="t" style="left:1149.0px;top:179.25px;font-size:17.3px;line-height:17.3px;color:#fff;transform:scaleX(1.039);">Aktualności</span>
<span class="t" style="left:997.2px;top:691.25px;font-size:11.8px;line-height:11.8px;color:#fff;transform:scaleX(1.095);">Copyright 2022 by</span>
<span class="t" style="left:1106.8px;top:691.25px;font-size:11.8px;line-height:11.8px;color:#fff;transform:scaleX(0.979);">RAFSOFT.NET.</span>
<span class="t" style="left:1193.1px;top:691.25px;font-size:11.8px;line-height:11.8px;color:#fff;transform:scaleX(1.077);">Wszystkie prawa zastrzeżone.</span>
<span class="t" style="left:508.6px;top:712.25px;font-size:13px;line-height:13px;color:#f4f4f4;transform:scaleX(0.888);">2022-11-09</span>
<span class="t" style="left:577.6px;top:712.25px;font-size:13px;line-height:13px;color:#f4f4f4;transform:scaleX(0.839);">RAZEM NETTO: 0,00 PLN</span>
<span class="t" style="left:973.5px;top:712.25px;font-size:13px;line-height:13px;color:#f4f4f4;transform:scaleX(0.831);">RAZEM BRUTTO: 0,00 PLN</span>

<!-- ===== dialog ===== -->
<div id="dlg" class="a">
  <div id="dlgtitle" class="a"></div>
  <svg style="left:473px;top:8px" width="10.4" height="10.4" viewBox="0 0 11 11"><path d="M0.5 0.5 L10.5 10.5 M10.5 0.5 L0.5 10.5" stroke="#111" stroke-width="1.1" fill="none"/></svg>
  <!-- inputs -->
  <div class="inp" style="left:33px;top:66px;width:201px;height:20px"></div>
  <div class="btn" style="left:241px;top:66px;width:57px;height:20px;border:1px solid #1c84d8;background:#efefef"></div>
  <div class="a" style="left:242px;top:67px;width:55px;height:18px;border:1px dotted #123"></div>
  <div class="inp" style="left:33px;top:114px;width:201px;height:20px"></div>
  <div class="btn" style="left:241px;top:114px;width:57px;height:20px"></div>
  <div class="inp" style="left:33px;top:162px;width:97px;height:20px"></div>
  <div class="btn" style="left:132px;top:162px;width:21px;height:20px"></div>
  <div class="inp" style="left:169px;top:162px;width:97px;height:20px"></div>
  <div class="btn" style="left:268px;top:162px;width:21px;height:20px"></div>
  <!-- combo -->
  <div class="inp" style="left:33px;top:218px;width:265px;height:21px"></div>
  <div class="btn" style="left:278px;top:221px;width:17px;height:16px;border-color:#6a6a6a;background:linear-gradient(#ebebeb 45%,#d4d4d4 46%);box-shadow:inset 0 0 0 1px #fff"></div>
  <svg style="left:282px;top:226px" width="9" height="6" viewBox="0 0 9 6"><path d="M0.5 0.5 L8.5 0.5 L4.5 5 Z" fill="#111"/></svg>
  <!-- spin -->
  <div class="inp" style="left:33px;top:266px;width:58px;height:20px"></div>
  <div class="btn" style="left:73px;top:267px;width:17px;height:9px;background:#e9e9e9;border-color:#c4c4c4"></div>
  <div class="btn" style="left:73px;top:276px;width:17px;height:9px;background:#e9e9e9;border-color:#c4c4c4"></div>
  <svg style="left:79px;top:270px" width="5" height="3" viewBox="0 0 5 3"><path d="M0 3 L2.5 0 L5 3 Z" fill="#222"/></svg>
  <svg style="left:79px;top:279px" width="5" height="3" viewBox="0 0 5 3"><path d="M0 0 L2.5 3 L5 0 Z" fill="#222"/></svg>
  <!-- kwota -->
  <div class="inp" style="left:105px;top:266px;width:97px;height:20px"></div>
  <!-- podpis -->
  <div class="inp" style="left:33px;top:314px;width:265px;height:20px"></div>
  <!-- bottom buttons -->
  <div class="btn" style="left:33px;top:354px;width:113px;height:33px"></div>
  <div class="btn" style="left:369px;top:354px;width:113px;height:33px"></div>
  <!-- radios -->
  <div class="radio" style="left:337px;top:52px"></div>
  <div class="a" style="left:340px;top:55px;width:7px;height:7px;border-radius:50%;background:#222"></div>
  <div class="radio" style="left:337px;top:76px"></div>
  <div class="radio" style="left:337px;top:100px"></div>
  <!-- edit button -->
  <div class="btn" style="left:337px;top:122px;width:153px;height:25px"></div>
  <!-- checkbox -->
  <div class="a" style="left:345px;top:170px;width:13px;height:13px;background:#fff;border:1px solid #333"></div>
  <svg style="left:346px;top:171px" width="11" height="11" viewBox="0 0 11 11"><path d="M1.5 5.5 L4.2 8.3 L9.5 2.2" stroke="#111" stroke-width="1.3" fill="none"/></svg>
  <svg style="left:136.60000000000002px;top:164.2px" width="11.2" height="15.2" viewBox="0 0 11.2 15.2"><path d="M0.4 0.4 H10.8 V11 L7 14.8 H0.4 Z" fill="#e4e7eb" stroke="#c2c6cc" stroke-width="0.6"/><path d="M0.4 0.4 V14.8" stroke="#8a8a8a" stroke-width="0.6"/><path d="M10.8 11 H7 V14.8 Z" fill="#fafafa" stroke="#555" stroke-width="0.7"/><text x="0.5" y="10.6" font-family="Liberation Sans" font-weight="700" font-size="10.6" fill="#0a0a0a" textLength="10.2" lengthAdjust="spacingAndGlyphs">27</text></svg><svg style="left:272.79999999999995px;top:164.2px" width="11.2" height="15.2" viewBox="0 0 11.2 15.2"><path d="M0.4 0.4 H10.8 V11 L7 14.8 H0.4 Z" fill="#e4e7eb" stroke="#c2c6cc" stroke-width="0.6"/><path d="M0.4 0.4 V14.8" stroke="#8a8a8a" stroke-width="0.6"/><path d="M10.8 11 H7 V14.8 Z" fill="#fafafa" stroke="#555" stroke-width="0.7"/><text x="0.5" y="10.6" font-family="Liberation Sans" font-weight="700" font-size="10.6" fill="#0a0a0a" textLength="10.2" lengthAdjust="spacingAndGlyphs">27</text></svg><svg style="left:362px;top:126.39999999999998px" width="16" height="15.6" viewBox="0 0 16 15.6"><path d="M0.5 1.5 H9 L12.4 4.8 V15 H0.5 Z" fill="#fbfbfb" stroke="#9a9a9a" stroke-width="0.8"/><path d="M9 1.5 V4.8 H12.4" fill="#e8e8e8" stroke="#9a9a9a" stroke-width="0.7"/><path d="M13.6 0.6 L15.6 2.4 L6 12.6 L2.6 13.8 L3.6 10.6 Z" fill="#6f94e4" stroke="#3c5cb0" stroke-width="0.6"/><path d="M13.6 0.6 L15.6 2.4 L14.4 3.6 L12.4 1.8 Z" fill="#b8c8f0"/><path d="M3.6 10.6 L6 12.6 L2.6 13.8 Z" fill="#f0d8a8" stroke="#3c5cb0" stroke-width="0.4"/></svg><svg style="left:187.10000000000002px;top:270.29999999999995px" width="9.2" height="11.8" viewBox="0 0 9.2 11.8"><rect x="0.2" y="0.2" width="8.8" height="11.4" rx="0.8" fill="#1a1a1a"/><rect x="1.3" y="1.3" width="6.6" height="2.4" fill="#f4f4f4"/><rect x="1.4" y="5.0" width="1.5" height="1.2" fill="#f0f0f0"/><rect x="3.8" y="5.0" width="1.5" height="1.2" fill="#f0f0f0"/><rect x="6.2" y="5.0" width="1.5" height="1.2" fill="#f0f0f0"/><rect x="1.4" y="7.1" width="1.5" height="1.2" fill="#f0f0f0"/><rect x="3.8" y="7.1" width="1.5" height="1.2" fill="#f0f0f0"/><rect x="6.2" y="7.1" width="1.5" height="1.2" fill="#f0f0f0"/><rect x="1.4" y="9.2" width="1.5" height="1.2" fill="#f0f0f0"/><rect x="3.8" y="9.2" width="1.5" height="1.2" fill="#f0f0f0"/><rect x="6.2" y="9.2" width="1.5" height="1.2" fill="#f0f0f0"/></svg><svg style="left:394px;top:356.1px" width="27.4" height="28.6" viewBox="0 0 27.4 28.6"><path d="M12.6 6.8 L15 0.6 L24.4 4.6 L21.6 12.4" fill="#fff" stroke="#111" stroke-width="0.9" stroke-linejoin="round"/><path d="M14 6.6 L15.8 2 L22.8 5 L20.8 10.4" fill="none" stroke="#111" stroke-width="0.6"/><path d="M1.6 14.4 Q2 10 6 8.4 L11.4 6.4 Q14 5.8 16.6 7 L24.6 10.6 Q26.8 11.8 26.8 14.4 V21.4 L15.8 27.6 L12.2 25.8 L12.2 24 L3.4 20.4 L1.6 21.2 Z" fill="#fff" stroke="#111" stroke-width="0.9" stroke-linejoin="round"/><path d="M15.8 27.6 V19.6 Q16 16.6 18.6 15 L24.6 11.4 Q26.6 11.6 26.8 14.4 V21.4 Z" fill="#cfcfcf" stroke="#111" stroke-width="0.7" stroke-linejoin="round"/><path d="M3.4 18 L12.2 21.8 V25.8 M3.4 18 V20.4" fill="none" stroke="#111" stroke-width="0.8"/><path d="M3.8 18.8 L0.4 22.8 L8.6 26.4 L12 22.6 Z" fill="#fff" stroke="#111" stroke-width="0.8" stroke-linejoin="round"/><path d="M4 22.4 L8 24.2 M5.4 21 L9.4 22.8" stroke="#111" stroke-width="0.6"/></svg>
  <span class="t" style="left:3.6px;top:7.25px;font-size:12.2px;line-height:12.2px;color:#000;transform:scaleX(0.959);">Wezwanie do zapłaty</span>
<span class="t" style="left:31.6px;top:51.25px;font-size:11.6px;line-height:11.6px;color:#000;transform:scaleX(0.938);">Nazwa firmy</span>
<span class="t" style="left:245.8px;top:70.25px;font-size:11.6px;line-height:11.6px;color:#000;transform:scaleX(0.989);">wybierz..</span>
<span class="t" style="left:31.6px;top:99.25px;font-size:11.6px;line-height:11.6px;color:#000;transform:scaleX(0.921);">Numer dokumentu</span>
<span class="t" style="left:245.8px;top:118.25px;font-size:11.6px;line-height:11.6px;color:#000;transform:scaleX(0.989);">wybierz..</span>
<span class="t" style="left:31.6px;top:146.25px;font-size:11.6px;line-height:11.6px;color:#000;transform:scaleX(0.932);">Z dnia</span>
<span class="t" style="left:167.9px;top:146.25px;font-size:11.6px;line-height:11.6px;color:#000;transform:scaleX(0.929);">Winno być zapłacone do</span>
<span class="t" style="left:352.5px;top:53.25px;font-size:11.6px;line-height:11.6px;color:#000;transform:scaleX(0.903);">Przypomnienie</span>
<span class="t" style="left:352.5px;top:77.25px;font-size:11.6px;line-height:11.6px;color:#000;transform:scaleX(0.922);">Wezwanie</span>
<span class="t" style="left:352.5px;top:101.25px;font-size:11.6px;line-height:11.6px;color:#000;transform:scaleX(0.934);">Wezwanie ostateczne</span>
<span class="t" style="left:379.7px;top:129.25px;font-size:11.6px;line-height:11.6px;color:#000;transform:scaleX(0.971);">Edytuj tekst wez.</span>
<span class="t" style="left:359.5px;top:158.25px;font-size:11.6px;line-height:11.6px;color:#000;transform:scaleX(0.935);">drukuj w dolnej części</span>
<span class="t" style="left:359.5px;top:172.25px;font-size:11.6px;line-height:11.6px;color:#000;transform:scaleX(0.933);">adres dla kopert DL z</span>
<span class="t" style="left:359.5px;top:184.25px;font-size:11.6px;line-height:11.6px;color:#000;transform:scaleX(0.903);">okienkiem</span>
<span class="t" style="left:31.6px;top:195.25px;font-size:11.6px;line-height:11.6px;color:#000;transform:scaleX(0.934);">Wpłatę prosimy o przekazanie na konto</span>
<span class="t" style="left:31.6px;top:251.25px;font-size:11.6px;line-height:11.6px;color:#000;transform:scaleX(0.939);">W terminie</span>
<span class="t" style="left:103.7px;top:251.25px;font-size:11.6px;line-height:11.6px;color:#000;transform:scaleX(0.953);">Kwota</span>
<span class="t" style="left:41.2px;top:271.25px;font-size:11.6px;line-height:11.6px;color:#000;transform:scaleX(0.858);">5</span>
<span class="t" style="left:161.2px;top:271.25px;font-size:11.6px;line-height:11.6px;color:#000;transform:scaleX(0.927);">0,00</span>
<span class="t" style="left:31.6px;top:299.25px;font-size:11.6px;line-height:11.6px;color:#000;transform:scaleX(0.909);">Podpis</span>
<span class="t" style="left:70.1px;top:365.25px;font-size:11.6px;line-height:11.6px;color:#000;transform:scaleX(0.905);">Zamknij</span>
<span class="t" style="left:426.0px;top:365.25px;font-size:11.6px;line-height:11.6px;color:#000;transform:scaleX(0.959);">Drukuj</span>
</div>

</div>
</body>
</html>
